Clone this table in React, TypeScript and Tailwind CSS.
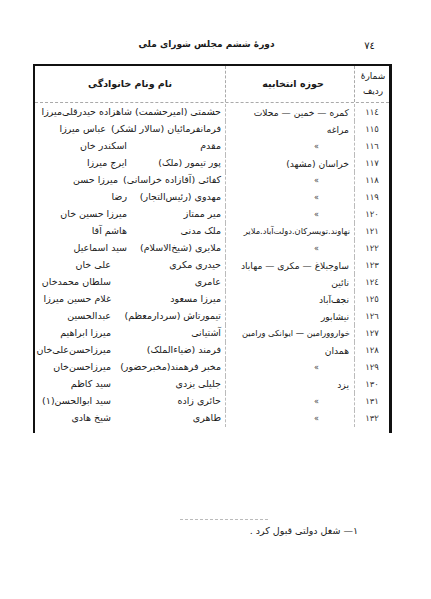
import React from 'react';

interface Row {
  num: string;
  district: string;
  surname: string;
  first: string;
  low?: boolean;
  long?: boolean;
}

const rows: Row[] = [
  { num: '١١٤', district: 'کمره — خمین — محلات', surname: 'حشمتی (امیرحشمت) شاهزاده حیدرقلی‌میرزا', first: '' },
  { num: '١١٥', district: 'مراغه', surname: 'فرمانفرمائیان (سالار لشکر)', first: 'عباس میرزا' },
  { num: '١١٦', district: '»', surname: 'مقدم', first: 'اسکندر خان' },
  { num: '١١٧', district: 'خراسان (مشهد)', surname: 'پور تیمور (ملک)', first: 'ایرج میرزا' },
  { num: '١١٨', district: '»', surname: 'کفائی (آقازاده خراسانی)', first: 'میرزا حسن' },
  { num: '١١٩', district: '»', surname: 'مهدوی (رئیس‌التجار)', first: 'رضا' },
  { num: '١٢٠', district: '»', surname: 'میر ممتاز', first: 'میرزا حسین خان' },
  { num: '١٢١', district: 'نهاوند.تویسرکان.دولت‌آباد.ملایر', surname: 'ملک مدنی', first: 'هاشم آقا', long: true },
  { num: '١٢٢', district: '»', surname: 'ملایری (شیخ‌الاسلام)', first: 'سید اسماعیل' },
  { num: '١٢٣', district: 'ساوجبلاغ — مکری — مهاباد', surname: 'حیدری مکری', first: 'علی خان', low: true },
  { num: '١٢٤', district: 'نائین', surname: 'عامری', first: 'سلطان محمدخان', low: true },
  { num: '١٢٥', district: 'نجف‌آباد', surname: 'میرزا مسعود', first: 'غلام حسین میرزا', low: true },
  { num: '١٢٦', district: 'نیشابور', surname: 'تیمورتاش (سردارمعظم)', first: 'عبدالحسین', low: true },
  { num: '١٢٧', district: 'خواروورامین — ایوانکی ورامین', surname: 'آشتیانی', first: 'میرزا ابراهیم', low: true, long: true },
  { num: '١٢٨', district: 'همدان', surname: 'فرمند (ضیاءالملک)', first: 'میرزاحسن‌علی‌خان', low: true },
  { num: '١٢٩', district: '»', surname: 'مخبر فرهمند(مخبرحضور)', first: 'میرزاحسن‌خان', low: true },
  { num: '١٣٠', district: 'یزد', surname: 'جلیلی یزدی', first: 'سید کاظم', low: true },
  { num: '١٣١', district: '»', surname: 'حائری زاده', first: 'سید ابوالحسن(١)', low: true },
  { num: '١٣٢', district: '»', surname: 'طاهری', first: 'شیخ هادی', low: true },
];

export default function App() {
  return (
    <div
      dir="rtl"
      className="w-[431px] h-[599px] bg-white text-[#1a1a1a] overflow-hidden"
      style={{ fontFamily: '"DejaVu Sans", sans-serif' }}
    >
      {/* Running head */}
      <div className="pt-[37px] mr-[39px] w-[359px] grid grid-cols-[1fr_auto_1fr] items-center h-[53px]">
        <span className="justify-self-start pr-[17px] text-[10px] tracking-[2px]">٧٤</span>
        <span className="pr-[12px] text-[9px] font-bold">دورۀ ششم مجلس شورای ملی</span>
        <span />
      </div>

      {/* Table */}
      <div className="mt-[11px] mr-[39px] w-[359px] border-t-2 border-l-2 border-r-[3px] border-[#111]">
        <div className="grid grid-cols-[34px_129px_1fr] h-[37px] border-b border-dashed border-[#aaa]">
          <div className="flex flex-col items-center justify-center text-[9px] leading-[15px] pl-[2px]">
            <span>شمارهٔ</span>
            <span>ردیف</span>
          </div>
          <div className="flex items-center justify-center pl-[6px] text-[9.5px] font-bold border-r border-dashed border-[#aaa]">
            حوزه انتخابیه
          </div>
          <div className="flex items-center justify-center text-[9.5px] font-bold border-r border-dashed border-[#aaa]">
            نام ونام خانوادگی
          </div>
        </div>

        <div className="grid grid-cols-[34px_129px_1fr] pt-[1px] pb-[6px]">
          {rows.map((r) => (
            <React.Fragment key={r.num}>
              <div className="h-[17px] flex items-center justify-center text-[8.5px] tracking-[2px] text-[#333]">
                {r.num}
              </div>
              <div
                className={
                  r.long
                    ? 'h-[17px] flex items-center border-r border-dashed border-[#bbb] pr-[4px] text-[8.3px] whitespace-nowrap overflow-hidden'
                    : 'h-[17px] flex items-center border-r border-dashed border-[#bbb] pr-[5px] text-[9.2px] whitespace-nowrap overflow-hidden'
                }
              >
                {r.district === '»' ? (
                  <span className="mr-[30px] text-[8px] text-[#444]">»</span>
                ) : (
                  r.district
                )}
              </div>
              <div className="h-[17px] flex items-center border-r border-dashed border-[#bbb] pr-[4px] text-[9.5px] whitespace-nowrap">
                <span className={r.first ? (r.low ? 'shrink-0 min-w-[110px] pl-[5px]' : 'shrink-0 min-w-[94px] pl-[5px]') : ''}>
                  {r.surname}
                </span>
                {r.first && <span>{r.first}</span>}
              </div>
            </React.Fragment>
          ))}
        </div>
      </div>

      {/* Footnote */}
      <div className="mt-[86px] mr-[163px] w-[88px] border-t border-dashed border-[#bbb]" />
      <div className="mt-[4px] mr-[73px] text-[9.5px]">١— شغل دولتی قبول کرد .</div>
    </div>
  );
}
